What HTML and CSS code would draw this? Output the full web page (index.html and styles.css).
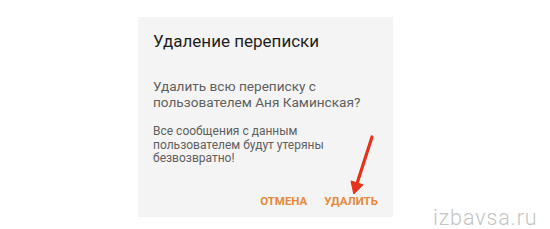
FILE: index.html
```html
<!DOCTYPE html>
<html lang="ru">
<head>
<meta charset="utf-8">
<title>Удаление переписки</title>
<link rel="stylesheet" href="styles.css">
</head>
<body>
<div class="page">
  <div class="dialog">
    <h1 class="title">Удаление переписки</h1>
    <p class="question">Удалить всю переписку с<br>пользователем Аня Каминская?</p>
    <p class="note">Все сообщения с данным<br>пользователем будут утеряны<br>безвозвратно!</p>
    <div class="actions">
      <span class="btn">ОТМЕНА</span>
      <span class="btn">УДАЛИТЬ</span>
    </div>
    <svg class="arrow" width="40" height="70" viewBox="0 0 40 70">
      <path d="M28 3 L13.5 48" stroke="#e5321c" stroke-width="3.2" stroke-linecap="round" fill="none"/>
      <path d="M7 47 L19 50.8 L9.8 60 Z" fill="#e5321c" stroke="#e5321c" stroke-width="1" stroke-linejoin="round"/>
    </svg>
  </div>
  <div class="watermark">izbavsa.ru</div>
</div>
</body>
</html>
```
FILE: styles.css
```css
* { box-sizing: border-box; }
html, body {
  margin: 0;
  padding: 0;
  background: #ffffff;
}
.page {
  position: relative;
  width: 550px;
  height: 229px;
  padding: 17px 0 0 138px;
  font-family: Roboto, "Noto Sans", sans-serif;
}
.dialog {
  position: relative;
  width: 255px;
  height: 200px;
  background: #f4f4f4;
  padding: 13px 15px 0 15px;
  display: flex;
  flex-direction: column;
}
.title {
  margin: 0;
  font-size: 17px;
  line-height: 22px;
  font-weight: 400;
  color: #1f1f1f;
}
.question {
  margin: 26px 0 0 0;
  font-size: 13.6px;
  line-height: 16px;
  color: #5f5f5f;
}
.note {
  margin: 15px 0 0 0;
  font-size: 12px;
  line-height: 13.5px;
  color: #606060;
}
.actions {
  margin-top: 28px;
  display: flex;
  justify-content: flex-end;
  gap: 17px;
}
.btn {
  font-size: 11.5px;
  line-height: 14px;
  font-weight: 700;
  color: #e8883a;
}
.arrow {
  position: absolute;
  left: 206px;
  top: 117px;
}
.watermark {
  position: absolute;
  left: 433px;
  top: 205px;
  white-space: nowrap;
  font-family: Roboto, sans-serif;
  font-weight: 300;
  font-size: 21.5px;
  line-height: 26px;
  letter-spacing: 0.9px;
  color: #c4c4c4;
}
```
